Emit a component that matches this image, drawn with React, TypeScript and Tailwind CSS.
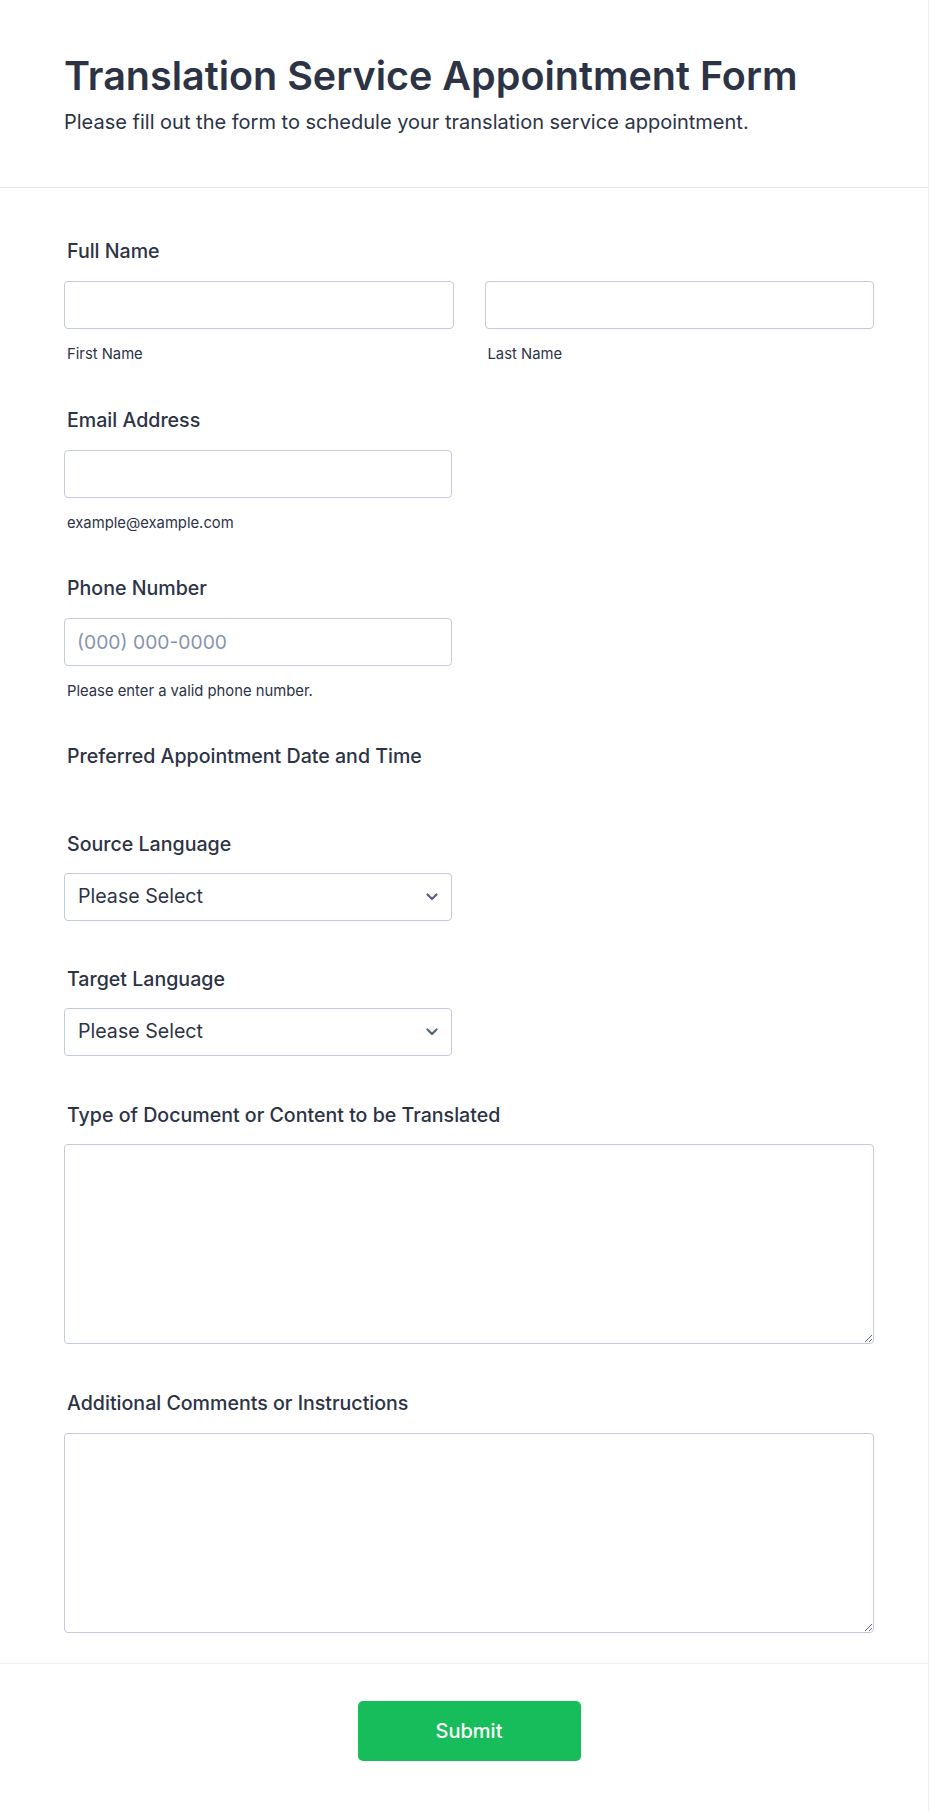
import React from "react";

const font = { fontFamily: "Inter, 'Noto Sans', sans-serif" };

function Label({ children }: { children: React.ReactNode }) {
  return (
    <div className="ml-[3px] text-[19.6px] leading-[27px] font-medium text-[#2c3345]">{children}</div>
  );
}

function Sub({ children }: { children: React.ReactNode }) {
  return <div className="ml-[3px] mt-[15px] text-[14.8px] leading-[21px] text-[#2c3345]">{children}</div>;
}

function Input({ placeholder }: { placeholder?: string }) {
  return (
    <input
      type="text"
      placeholder={placeholder}
      className="block w-full h-[48px] rounded-[4px] border border-[#c3cad8] bg-white px-[12px] text-[19.3px] text-[#2c3345] placeholder:text-[#8894ab] outline-none"
    />
  );
}

function Select() {
  return (
    <div className="relative w-[388px] h-[48px]">
      <select className="block w-full h-full appearance-none rounded-[4px] border border-[#c3cad8] bg-white pl-[13px] pr-[40px] text-[19.6px] text-[#2c3345] outline-none">
        <option>Please Select</option>
      </select>
      <svg
        className="pointer-events-none absolute right-[14px] top-[20px]"
        width="12"
        height="8"
        viewBox="0 0 12 8"
        fill="none"
      >
        <path d="M1.5 1.5L6 6L10.5 1.5" stroke="#57647e" strokeWidth="2.2" strokeLinecap="round" strokeLinejoin="round" />
      </svg>
    </div>
  );
}

function TextArea() {
  return (
    <textarea className="block w-full h-[200px] rounded-[4px] border border-[#c3cad8] bg-white px-[14px] py-[10px] text-[18px] text-[#2c3345] outline-none resize-y" />
  );
}

export default function App() {
  return (
    <div className="w-[930px] bg-white" style={font}>
      <div className="w-[929px] border-r border-b border-[#ececf4] bg-white">
        <div className="px-[64px] pt-[52px] pb-[51px] border-b border-[#e3e4ef]">
          <h1 className="text-[39.5px] leading-[48px] font-semibold text-[#2c3345]">
            Translation Service Appointment Form
          </h1>
          <p className="mt-[9px] text-[20px] leading-[27px] text-[#2c3345]">
            Please fill out the form to schedule your translation service appointment.
          </p>
        </div>

        <div className="pl-[64px] pr-[54px] pt-[50px] pb-[30px] flex flex-col">
          <div>
            <Label>Full Name</Label>
            <div className="mt-[16px] grid grid-cols-2 gap-[31px]">
              <div>
                <Input />
                <Sub>First Name</Sub>
              </div>
              <div>
                <Input />
                <Sub>Last Name</Sub>
              </div>
            </div>
          </div>

          <div className="mt-[42px]">
            <Label>Email Address</Label>
            <div className="mt-[16px] w-[388px]">
              <Input />
            </div>
            <Sub>example@example.com</Sub>
          </div>

          <div className="mt-[41px]">
            <Label>Phone Number</Label>
            <div className="mt-[16px] w-[388px]">
              <Input placeholder="(000) 000-0000" />
            </div>
            <Sub>Please enter a valid phone number.</Sub>
          </div>

          <div className="mt-[41px]">
            <Label>Preferred Appointment Date and Time</Label>
          </div>

          <div className="mt-[61px]">
            <Label>Source Language</Label>
            <div className="mt-[15px]">
              <Select />
            </div>
          </div>

          <div className="mt-[45px]">
            <Label>Target Language</Label>
            <div className="mt-[15px]">
              <Select />
            </div>
          </div>

          <div className="mt-[46px]">
            <Label>Type of Document or Content to be Translated</Label>
            <div className="mt-[15px]">
              <TextArea />
            </div>
          </div>

          <div className="mt-[46px]">
            <Label>Additional Comments or Instructions</Label>
            <div className="mt-[16px]">
              <TextArea />
            </div>
          </div>
        </div>

        <div className="pl-[64px] pr-[54px] pt-[37px] pb-[50px] border-t border-[#eeeef6] flex justify-center">
          <button className="w-[223px] h-[60px] rounded-[5px] bg-[#18bd5b] text-white text-[20px] font-medium">
            Submit
          </button>
        </div>
      </div>
    </div>
  );
}
